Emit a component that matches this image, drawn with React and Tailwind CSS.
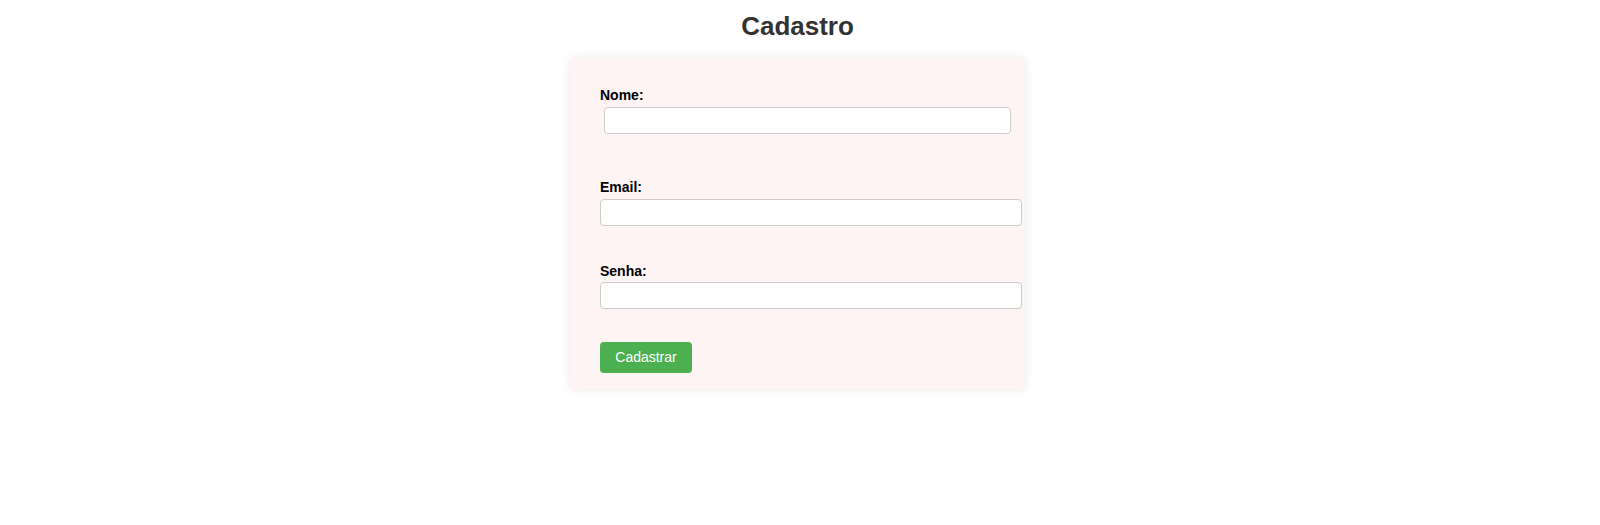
import React from "react";

const font = { fontFamily: '"Liberation Sans", Arial, sans-serif' };

const Field = ({ label, type, inputClass, labelClass }) => (
  <div className={labelClass}>
    <label className="block text-[14px] font-bold leading-[16px] text-black">{label}</label>
    <input
      type={type}
      className={`block h-[27px] rounded-[4px] border border-[#cccccc] bg-white px-2 text-[14px] outline-none ${inputClass}`}
    />
  </div>
);

export default function App() {
  return (
    <div className="min-h-[525px] bg-white pr-[5px]" style={font}>
      <h1 className="pt-[11px] text-center text-[26px] font-bold leading-[30px] text-[#333333]">
        Cadastro
      </h1>
      <form
        className="mx-auto mt-[17px] h-[331px] w-[455px] rounded-[5px] bg-[#fef4f3] pl-[30px] pt-[29px] shadow-[0_0_10px_rgba(0,0,0,0.1)]"
        onSubmit={(e) => e.preventDefault()}
      >
        <Field label="Nome:" type="text" inputClass="ml-[4px] mt-[4px] w-[407px]" />
        <Field label="Email:" type="email" labelClass="mt-[45px]" inputClass="mt-[4px] w-[422px]" />
        <Field label="Senha:" type="password" labelClass="mt-[37px]" inputClass="mt-[3px] w-[422px]" />
        <button
          type="submit"
          className="mt-[33px] h-[31px] w-[92px] rounded-[4px] bg-[#4caf50] text-[14px] text-white"
        >
          Cadastrar
        </button>
      </form>
    </div>
  );
}
